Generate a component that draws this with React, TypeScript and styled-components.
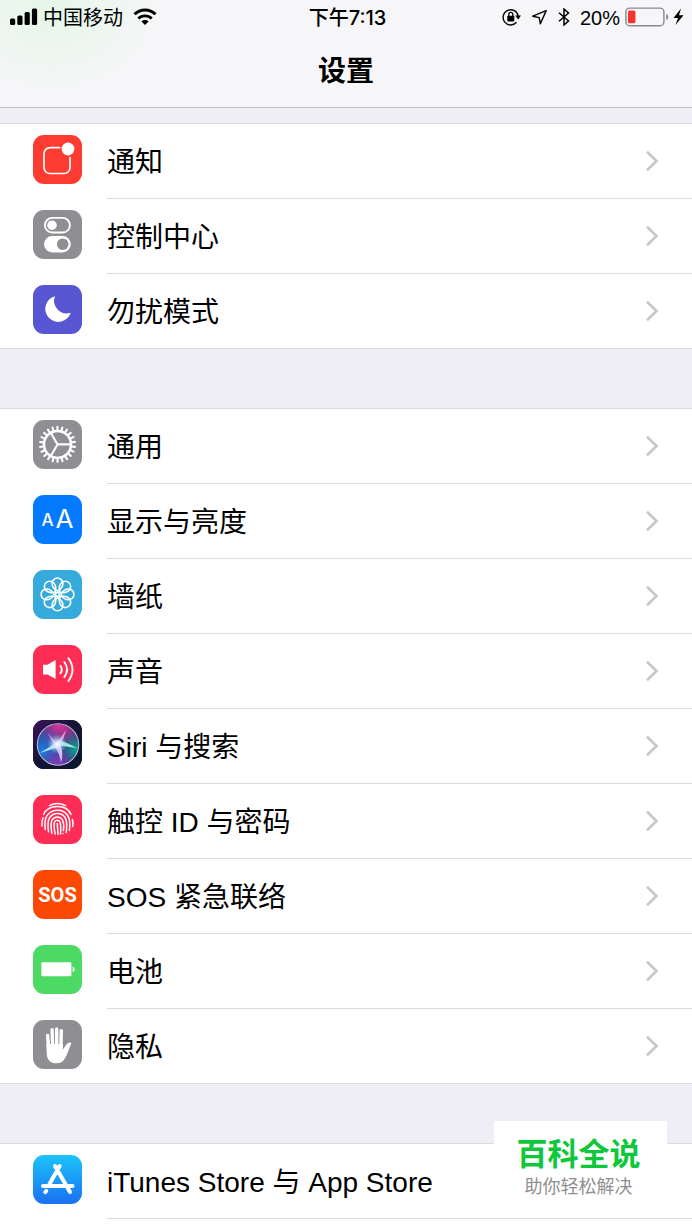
import React from "react";
import styled, { createGlobalStyle } from "styled-components";

const GlobalStyle = createGlobalStyle`
  *, *::before, *::after { box-sizing: border-box; }
  body {
    margin: 0;
    background: #efeef4;
    color: #000;
    font-family: "Liberation Sans", "Noto Sans CJK SC", sans-serif;
  }
`;

const Screen = styled.div`
  position: relative;
  display: flex;
  flex-direction: column;
  height: 100vh;
  overflow: hidden;
  background: #efeef4;
`;

const Header = styled.header`
  flex: none;
  border-bottom: 1px solid #c3c2c7;
  background:
    radial-gradient(ellipse 110px 80px at 50px 12px, #e5f6e8 0%, rgba(229, 246, 232, 0) 100%),
    #f6f6f8;
`;

const StatusBar = styled.div`
  display: grid;
  grid-template-columns: 1fr auto 1fr;
  align-items: center;
  height: 34px;
  padding: 0 7px 0 10px;
  font-family: Inter, "Noto Sans CJK SC", sans-serif;
  font-size: 20px;
  line-height: 24px;
`;

const StatusGroup = styled.div<{ $gap: number; $end?: boolean }>`
  display: flex;
  align-items: center;
  justify-content: ${(p) => (p.$end ? "flex-end" : "flex-start")};
  gap: ${(p) => p.$gap}px;
`;

const Clock = styled.time`
  padding-top: 2px;
  font-weight: 500;
`;

const Carrier = styled.span`
  padding-top: 2px;
`;

const Percent = styled.span`
  padding-top: 2px;
  font-family: "Liberation Sans", sans-serif;
`;

const Title = styled.h1`
  display: flex;
  align-items: center;
  justify-content: center;
  height: 73px;
  margin: 0;
  padding-bottom: 3px;
  font-size: 28px;
  font-weight: 600;
`;

const Content = styled.main`
  display: flex;
  flex-direction: column;
  gap: 59px;
  padding-top: 15px;
`;

const Group = styled.ul`
  margin: 0;
  padding: 0;
  list-style: none;
  background: #fff;
  border-top: 1px solid #dcdbe0;
  border-bottom: 1px solid #dcdbe0;
`;

const Row = styled.a`
  display: flex;
  padding-left: 33px;
  color: inherit;
  text-decoration: none;
`;

const Tile = styled.span<{ $fill: string }>`
  display: flex;
  flex: none;
  align-self: center;
  width: 49px;
  height: 49px;
  margin: 0 25px 4px 0;
  border-radius: 11px;
  background: ${(p) => p.$fill};
  overflow: hidden;
`;

const RowBody = styled.span`
  display: flex;
  flex: 1;
  align-items: center;
  justify-content: space-between;
  height: 75px;
  padding-right: 33px;
  border-bottom: 1px solid #dcdbe0;

  li:last-child & {
    height: 74px;
    border-bottom: 0;
  }
`;

const Label = styled.span`
  padding-top: 4px;
  font-size: 28px;
  line-height: 40px;
`;

const Badge = styled.aside`
  position: absolute;
  right: 25px;
  bottom: 23px;
  width: 173px;
  padding: 14px 4px 8px 0;
  background: #fff;
  text-align: center;
`;

const BadgeName = styled.strong`
  display: block;
  color: #0fc73a;
  font-size: 31px;
  font-weight: 700;
  line-height: 40px;
`;

const BadgeTag = styled.span`
  display: block;
  color: #8f8f8f;
  font-size: 18px;
  line-height: 24px;
`;

const Art = ({ children }: { children?: React.ReactNode }) => (
  <svg width="49" height="49" viewBox="0 0 49 49" fill="none" aria-hidden="true">
    {children}
  </svg>
);

const around = (n: number) => Array.from({ length: n }, (_, i) => (360 / n) * i);

const NotificationArt = () => (
  <Art>
    <path
      d="M26.5 12.6H17a6 6 0 0 0-6 6V32.5a6 6 0 0 0 6 6H31a6 6 0 0 0 6-6V22.5"
      stroke="#fff"
      strokeWidth="1.7"
      strokeLinecap="round"
    />
    <circle cx="35" cy="14" r="6.4" fill="#fff" />
  </Art>
);

const ControlArt = () => (
  <Art>
    <rect x="11.9" y="7.9" width="25" height="14.6" rx="7.3" stroke="#fff" strokeWidth="1.9" />
    <circle cx="19" cy="15.2" r="4.8" fill="#fff" />
    <rect x="11" y="26" width="26.8" height="16.4" rx="8.2" fill="#fff" />
    <circle cx="29.7" cy="34.2" r="5.8" fill="#8e8e93" />
  </Art>
);

const MoonArt = () => (
  <Art>
    <path d="M22 11.3A13 13 0 1 0 37.7 27.7A12.5 12.5 0 0 1 22 11.3Z" fill="#fff" />
  </Art>
);

const GearArt = () => (
  <Art>
    <g transform="translate(24.5 24.4)" stroke="#fff">
      <circle r="13.5" strokeWidth="2.5" />
      {around(22).map((a) => (
        <path key={a} d="M14.5 0H17.6" strokeWidth="2.1" strokeLinecap="round" transform={`rotate(${a + 8})`} />
      ))}
      {around(3).map((a) => (
        <path key={a} d="M0 0H13.5" strokeWidth="2.1" transform={`rotate(${a})`} />
      ))}
    </g>
  </Art>
);

const DisplayArt = () => (
  <Art>
    <g fill="#fff" fontFamily="Inter, sans-serif" textAnchor="middle">
      <text x="14.5" y="30.5" fontSize="17" fontWeight="500">A</text>
      <text x="31.5" y="32.5" fontSize="26">A</text>
    </g>
  </Art>
);

const FlowerArt = () => (
  <Art>
    <g transform="translate(24.5 24.4)" stroke="#fff" strokeWidth="1.6">
      <circle r="2" />
      {around(8).map((a) => (
        <path
          key={a}
          d="M3.4 0C5.6 -4 8 -5.4 11 -5.4A5.4 5.4 0 0 1 11 5.4C8 5.4 5.6 4 3.4 0Z"
          transform={`rotate(${a})`}
        />
      ))}
    </g>
  </Art>
);

const SoundArt = () => (
  <Art>
    <path d="M10 19.8H14.5L22.6 15V34L14.5 29.4H10Z" fill="#fff" />
    <path
      d="M27 20.3Q30.6 24.5 27 28.9M31 16.5Q37.2 24.5 31 32.7M35 12.6Q44 24.5 35 36.6"
      stroke="#fff"
      strokeWidth="1.9"
    />
  </Art>
);

const SiriArt = () => (
  <Art>
    <defs>
      <linearGradient id="siri-night" x1="0" y1="0" x2="1" y2="1">
        <stop offset="0" stopColor="#3c1258" />
        <stop offset="0.5" stopColor="#131535" />
        <stop offset="1" stopColor="#08182c" />
      </linearGradient>
      <radialGradient id="siri-pink" cx="0.55" cy="0" r="0.65">
        <stop offset="0" stopColor="#e0359b" />
        <stop offset="1" stopColor="#e0359b" stopOpacity="0" />
      </radialGradient>
      <radialGradient id="siri-blue" cx="0.1" cy="0.65" r="0.6">
        <stop offset="0" stopColor="#1c7fe0" />
        <stop offset="1" stopColor="#1c7fe0" stopOpacity="0" />
      </radialGradient>
      <radialGradient id="siri-teal" cx="0.95" cy="0.62" r="0.45">
        <stop offset="0" stopColor="#0fa396" />
        <stop offset="1" stopColor="#0fa396" stopOpacity="0" />
      </radialGradient>
      <radialGradient id="siri-violet" cx="0.5" cy="1" r="0.45">
        <stop offset="0" stopColor="#8c3bc0" />
        <stop offset="1" stopColor="#8c3bc0" stopOpacity="0" />
      </radialGradient>
      <radialGradient id="siri-glow">
        <stop offset="0" stopColor="#fff" />
        <stop offset="0.35" stopColor="#d8f2ff" stopOpacity="0.7" />
        <stop offset="1" stopColor="#8fd0ff" stopOpacity="0" />
      </radialGradient>
    </defs>
    <rect width="49" height="49" fill="url(#siri-night)" />
    <circle cx="25" cy="24.5" r="20.5" fill="#2a2f78" />
    <circle cx="25" cy="24.5" r="20.5" fill="url(#siri-pink)" />
    <circle cx="25" cy="24.5" r="20.5" fill="url(#siri-blue)" />
    <circle cx="25" cy="24.5" r="20.5" fill="url(#siri-teal)" />
    <circle cx="25" cy="24.5" r="20.5" fill="url(#siri-violet)" />
    <path d="M24 22L7 33Q17 30 26 27Z" fill="#b9ecff" opacity="0.9" />
    <path d="M23 25L44 28Q33 22 25 20Z" fill="#aef5e6" opacity="0.9" />
    <path d="M21 25Q27 34 28 43Q31 33 27 23Z" fill="#e9c8ff" opacity="0.9" />
    <path d="M25 25Q19 17 15 13Q18 22 23 26Z" fill="#e58ae0" opacity="0.7" />
    <path d="M23 24Q28 17 33 10Q31 19 27 25Z" fill="#f0b0e8" opacity="0.8" />
    <circle cx="24" cy="24" r="10" fill="url(#siri-glow)" />
    <circle cx="25" cy="24.5" r="20.7" stroke="#b9b6cf" strokeWidth="1.1" />
  </Art>
);

const TouchArt = () => (
  <Art>
    <g stroke="#fff" strokeWidth="1.5" strokeLinecap="round">
      <path d="M16.5 10.6Q24.5 6.5 32.5 10.6" />
      <path d="M10.6 19.5C15 9.2 33.5 8.5 38 19.5" />
      <path d="M9 31C9 28 8.6 25.5 10 22.8" />
      <path d="M39.4 24.5Q40.5 28 39.7 31.5" />
      <path d="M12.3 34.5C11.6 29 11.5 24 14 20.6C19 13.5 30.5 13.6 34.7 20.5C37.2 24.5 37.2 30 36.3 35.5" />
      <path d="M15.5 36.8C14.5 30 14.5 26 16.6 22.6C20.5 17 28.8 17.3 32 22.5C34.3 26.3 34 32 33.2 37.5" />
      <path d="M18.8 38.3C17.6 31 17.6 28 19 25C21.3 20.8 27.5 20.9 29.5 25C31 28.5 30.9 33 30.3 35.5" />
      <path d="M22.2 39C20.8 32.5 20.5 29.5 21.6 27C22.8 24.6 26 24.7 27 27.2C28 30.5 28 34 27.5 39" />
      <path d="M24.3 28.5C24.3 32 25 35 25 39.2M30 38.5V38.6" />
    </g>
  </Art>
);

const SosArt = () => (
  <Art>
    <text
      x="24.5"
      y="31.5"
      fill="#fff"
      fontFamily="Roboto, sans-serif"
      fontSize="20"
      fontWeight="700"
      textAnchor="middle"
    >
      SOS
    </text>
  </Art>
);

const BatteryArt = () => (
  <Art>
    <rect x="8.4" y="17.3" width="30" height="14" rx="1" fill="#fff" />
    <path d="M39.7 21.4Q41.6 21.8 41.6 24.3Q41.6 26.8 39.7 27.2Z" fill="#fff" />
  </Art>
);

const HandArt = () => (
  <Art>
    <g stroke="#fff" strokeWidth="3.4" strokeLinecap="round">
      <path d="M14.6 15.5L15.6 28M19.1 9.8L19.6 27M23.7 9V27M28.3 10.8L27.9 27" />
    </g>
    <path
      d="M13.3 24L30 24L29.7 29.5C31.8 27.5 33.5 23.2 36.2 22.5C37.8 22.1 38.8 23 38.1 24.2C36.2 27.5 35 33 32.5 37.5C30.5 41.5 27.5 43.3 23.5 43.3C17.5 43.3 14.2 40 13.8 34.5Z"
      fill="#fff"
    />
  </Art>
);

const StoreArt = () => (
  <Art>
    <g stroke="#fff" strokeWidth="4" strokeLinecap="round">
      <path d="M26.7 11L16.5 29M22 11L37 37M10 31H23.5M32.5 31H39.5M12.3 37.2L13.3 35.8M22 31H31" />
    </g>
  </Art>
);

const Chevron = () => (
  <svg width="14" height="22" viewBox="0 0 14 22" fill="none" aria-hidden="true">
    <path d="M2 1.8L11.5 11L2 20.2" stroke="#c7c7cc" strokeWidth="2.6" />
  </svg>
);

const SignalIcon = () => (
  <svg width="28" height="18" viewBox="0 0 28 18" aria-hidden="true">
    <rect x="0" y="10.5" width="5.2" height="6.5" rx="1.5" />
    <rect x="7.3" y="7.5" width="5.2" height="9.5" rx="1.5" />
    <rect x="14.6" y="4" width="5.2" height="13" rx="1.5" />
    <rect x="21.9" y="0.5" width="5.2" height="16.5" rx="1.5" />
  </svg>
);

const WifiIcon = () => (
  <svg width="24" height="18" viewBox="0 0 24 18" fill="none" aria-hidden="true">
    <path d="M1.5 6.2A15 15 0 0 1 22.5 6.2" stroke="#000" strokeWidth="3" />
    <path d="M5.3 10.6A9.4 9.4 0 0 1 18.7 10.6" stroke="#000" strokeWidth="2.8" />
    <path d="M12 17L8.4 13.4A5.2 5.2 0 0 1 15.6 13.4Z" fill="#000" />
  </svg>
);

const LockIcon = () => (
  <svg width="19" height="18" viewBox="0 0 19 18" fill="none" aria-hidden="true">
    <path d="M14.5 14.3A7.6 7.6 0 1 1 16.2 8" stroke="#000" strokeWidth="1.4" />
    <path d="M13.2 7.6H19L16.2 11.4Z" fill="#000" />
    <rect x="5.3" y="7.8" width="7" height="5.8" rx="0.8" fill="#000" />
    <path d="M6.8 8V6.4A2 2 0 0 1 10.8 6.4V8" stroke="#000" strokeWidth="1.3" />
  </svg>
);

const LocationIcon = () => (
  <svg width="17" height="18" viewBox="0 0 17 18" fill="none" aria-hidden="true">
    <path d="M15.2 2.6L1.8 8.2L8.2 9.6L9.4 15.8Z" stroke="#000" strokeWidth="1.4" strokeLinejoin="round" />
  </svg>
);

const BluetoothIcon = () => (
  <svg width="12" height="18" viewBox="0 0 12 18" fill="none" aria-hidden="true">
    <path d="M1 4.8L10.5 13L6 17V1L10.5 5L1 13.2" stroke="#000" strokeWidth="1.5" />
  </svg>
);

const PowerIcon = () => (
  <svg width="60" height="20" viewBox="0 0 60 20" fill="none" aria-hidden="true">
    <rect x="0.9" y="1.1" width="38" height="17.6" rx="3.8" stroke="#8b8b8e" strokeWidth="1.4" />
    <rect x="3" y="3.6" width="7.4" height="12.6" rx="1.5" fill="#f8322c" />
    <path d="M41.2 7Q43.3 7.5 43.3 10Q43.3 12.5 41.2 13Z" fill="#8b8b8e" />
    <path d="M56 1.5L48.5 11H53L50.5 18L58.5 8.3H54Z" fill="#000" />
  </svg>
);

type Item = { id: string; label?: string; fill: string; art: React.ReactNode };

const groups: Item[][] = [
  [
    { id: "notifications", label: "通知", fill: "#fe3b30", art: <NotificationArt /> },
    { id: "control", label: "控制中心", fill: "#8e8e93", art: <ControlArt /> },
    { id: "dnd", label: "勿扰模式", fill: "#5856d2", art: <MoonArt /> },
  ],
  [
    { id: "general", label: "通用", fill: "#8e8e93", art: <GearArt /> },
    { id: "display", label: "显示与亮度", fill: "#037aff", art: <DisplayArt /> },
    { id: "wallpaper", label: "墙纸", fill: "#35aadb", art: <FlowerArt /> },
    { id: "sounds", label: "声音", fill: "#fe2d55", art: <SoundArt /> },
    { id: "siri", label: "Siri 与搜索", fill: "#131535", art: <SiriArt /> },
    { id: "touch-id", label: "触控 ID 与密码", fill: "#fe2d55", art: <TouchArt /> },
    { id: "sos", label: "SOS 紧急联络", fill: "#fc4a06", art: <SosArt /> },
    { id: "battery", label: "电池", fill: "#4cd964", art: <BatteryArt /> },
    { id: "privacy", label: "隐私", fill: "#8e8e93", art: <HandArt /> },
  ],
  [
    {
      id: "store",
      label: "iTunes Store 与 App Store",
      fill: "linear-gradient(#1cc3fa, #1b70f2)",
      art: <StoreArt />,
    },
    { id: "wallet", fill: "#5a5a5e", art: <Art /> },
  ],
];

export default function App() {
  return (
    <Screen>
      <GlobalStyle />
      <Header>
        <StatusBar>
          <StatusGroup $gap={10}>
            <StatusGroup $gap={5}>
              <SignalIcon />
              <Carrier>中国移动</Carrier>
            </StatusGroup>
            <WifiIcon />
          </StatusGroup>
          <Clock>下午7:13</Clock>
          <StatusGroup $gap={10} $end>
            <LockIcon />
            <LocationIcon />
            <BluetoothIcon />
            <StatusGroup $gap={5}>
              <Percent>20%</Percent>
              <PowerIcon />
            </StatusGroup>
          </StatusGroup>
        </StatusBar>
        <Title>设置</Title>
      </Header>
      <Content>
        {groups.map((items) => (
          <Group key={items[0].id}>
            {items.map((item) => (
              <li key={item.id}>
                <Row href={`#${item.id}`}>
                  <Tile $fill={item.fill}>{item.art}</Tile>
                  <RowBody>
                    {item.label && <Label>{item.label}</Label>}
                    <Chevron />
                  </RowBody>
                </Row>
              </li>
            ))}
          </Group>
        ))}
      </Content>
      <Badge>
        <BadgeName>百科全说</BadgeName>
        <BadgeTag>助你轻松解决</BadgeTag>
      </Badge>
    </Screen>
  );
}
